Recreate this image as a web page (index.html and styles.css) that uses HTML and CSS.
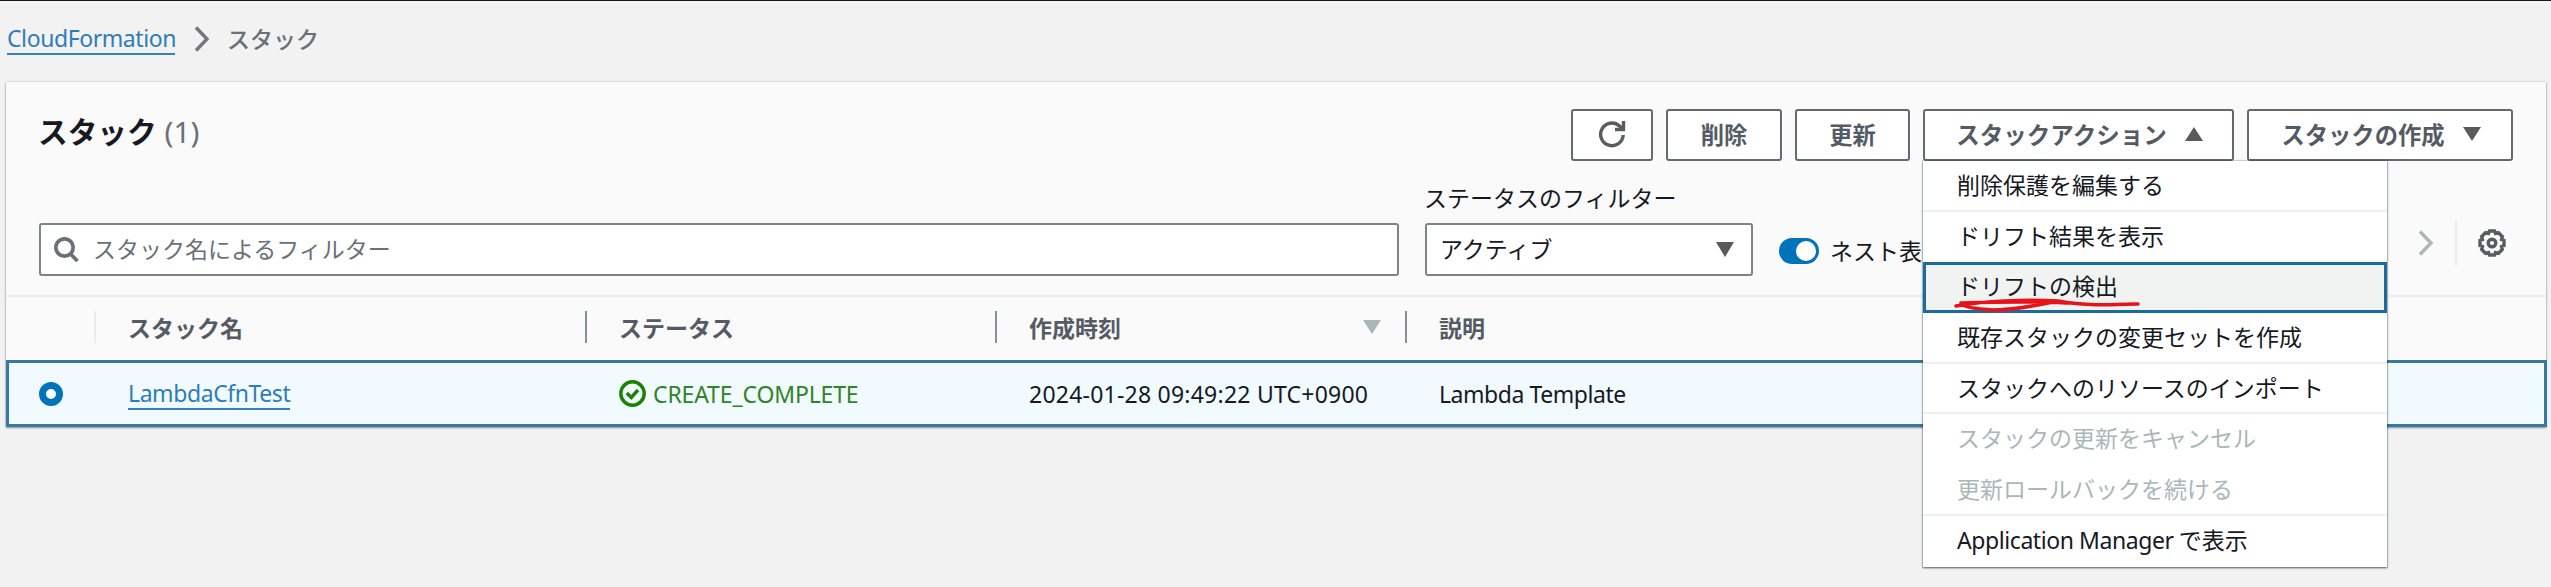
FILE: index.html
```html
<!DOCTYPE html>
<html lang="ja">
<head>
<meta charset="utf-8">
<title>CloudFormation - スタック</title>
<link rel="stylesheet" href="styles.css">
</head>
<body>
<nav class="breadcrumb">
  <a class="link crumb-link">CloudFormation</a>
  <svg class="crumb-arrow" width="16" height="26" viewBox="0 0 16 26"><path d="M2 1.500L13 13L2 24.500"/></svg>
  <span class="crumb-current">スタック</span>
</nav>
<main class="panel">
  <header class="panel-head">
    <h1 class="title">スタック <span class="count">(1)</span></h1>
    <div class="actions">
      <button class="btn refresh"><svg width="28" height="28" viewBox="0 0 28 28"><path d="M25.200 15A11.300 11.300 0 1 1 21.500 6L24 8.500"/><path d="M25.500 1V9.500H17"/></svg></button>
      <button class="btn delete">削除</button>
      <button class="btn update">更新</button>
      <div class="dropdown">
        <button class="btn stack-actions">スタックアクション<svg class="caret" width="18" height="14" viewBox="0 0 18 14"><path d="M9 0L18 14H0Z"/></svg></button>
        <ul class="menu">
          <li class="item ruled">削除保護を編集する</li>
          <li class="item">ドリフト結果を表示</li>
          <li class="item active">ドリフトの検出
            <svg class="scribble" width="188" height="16" viewBox="0 0 188 16"><path d="M2 8C30 3 70 1 104 3C85 7 60 12 40 12C22 11 8 9 7 5M104 3C130 8 155 7 184 6M8 5C40 4 75 3 112 5"/></svg>
          </li>
          <li class="item ruled">既存スタックの変更セットを作成</li>
          <li class="item ruled">スタックへのリソースのインポート</li>
          <li class="item disabled">スタックの更新をキャンセル</li>
          <li class="item disabled ruled">更新ロールバックを続ける</li>
          <li class="item"><span class="latin">Application Manager</span> で表示</li>
        </ul>
      </div>
      <button class="btn create">スタックの作成<svg class="caret" width="18" height="14" viewBox="0 0 18 14"><path d="M0 0H18L9 14Z"/></svg></button>
    </div>
  </header>
  <section class="filters">
    <div class="search">
      <svg width="26" height="26" viewBox="0 0 26 26"><circle cx="10.500" cy="10.500" r="8.700"/><path d="M16.500 17L23.500 24"/></svg>
      <span>スタック名によるフィルター</span>
    </div>
    <div class="status">
      <label class="status-label">ステータスのフィルター</label>
      <div class="select"><span>アクティブ</span><svg class="caret" width="18" height="15" viewBox="0 0 18 15"><path d="M0 0H18L9 15Z"/></svg></div>
    </div>
    <div class="nested"><i class="toggle"></i><span>ネスト表</span></div>
    <div class="pager">
      <svg class="next" width="16" height="26" viewBox="0 0 16 26"><path d="M2 1.500L13 13L2 24.500"/></svg>
      <i class="divider"></i>
      <svg class="gear" width="28" height="28" viewBox="0 0 28 28"><path d="M11.500 2H16.500L17.500 4.500L20.500 3.700L24.300 7.500L23.500 10.500L26 11.500V16.500L23.500 17.500L24.300 20.500L20.500 24.300L17.500 23.500L16.500 26H11.500L10.500 23.500L7.500 24.300L3.700 20.500L4.500 17.500L2 16.500V11.500L4.500 10.500L3.700 7.500L7.500 3.700L10.500 4.500Z"/><circle cx="14" cy="14" r="3.800"/></svg>
    </div>
  </section>
  <div class="grid head">
    <div class="cell"></div>
    <div class="cell">スタック名</div>
    <div class="cell">ステータス</div>
    <div class="cell">作成時刻<svg class="sort" width="18" height="14" viewBox="0 0 18 14"><path d="M0 0H18L9 14Z"/></svg></div>
    <div class="cell">説明</div>
  </div>
  <div class="grid row">
    <div class="cell"><i class="radio"></i></div>
    <div class="cell"><a class="link name">LambdaCfnTest</a></div>
    <div class="cell ok"><svg width="27" height="27" viewBox="0 0 27 27"><circle cx="13.500" cy="13.500" r="11.700"/><path d="M7.800 13L12.300 17.500L19 10"/></svg><span class="state">CREATE_COMPLETE</span></div>
    <div class="cell"><span class="date">2024-01-28 09:49:22 UTC+0900</span></div>
    <div class="cell"><span class="desc">Lambda Template</span></div>
  </div>
</main>
</body>
</html>
```
FILE: styles.css
```css
* { box-sizing: border-box; }
body {
  margin: 0;
  height: 587px;
  overflow: hidden;
  background: #f2f2f3;
  border-top: 1px solid #16191f;
  font-family: "Noto Sans", "Noto Sans CJK JP", sans-serif;
  font-size: 23px;
  line-height: 34px;
  color: #16191f;
}
svg { flex: none; fill: none; stroke: #5a5c60; stroke-width: 3.400; }
.link { color: #2e7db8; border-bottom: 2px solid #3584b6; line-height: 30px; }
.breadcrumb { display: flex; align-items: center; height: 81px; padding: 0 0 6px 7px; }
.crumb-link { width: 168px; white-space: nowrap; letter-spacing: -.42px; }
.crumb-arrow { margin: 0 17px 0 19px; stroke: #73767a; }
.crumb-current { color: #687078; font-weight: 500; font-family: "Noto Sans CJK JP", sans-serif; margin-bottom: 2px; }
.panel {
  margin: 0 5px 0 6px;
  height: 345px;
  background: #fafafa;
  box-shadow: 0 1px 2px rgba(0, 28, 36, .4), 0 0 2px rgba(0, 28, 36, .2);
}
.panel-head { display: flex; justify-content: space-between; padding: 27px 33px 0 33px; height: 79px; }
.title { margin: 2px 0 0 -1px; font: 700 29.700px/40px "Noto Sans CJK JP", sans-serif; }
.count { font-family: "Noto Sans", sans-serif; font-weight: 400; color: #687078; margin-left: 1px; }
.actions { display: flex; gap: 13px; }
.btn {
  display: flex;
  align-items: center;
  justify-content: center;
  height: 52px;
  padding: 0 0 2px;
  border: 2px solid #65686c;
  border-radius: 3px;
  background: #fff;
  color: #545b64;
  font: 700 23.300px/34px "Noto Sans CJK JP", sans-serif;
}
.refresh { width: 82px; }
.delete { width: 116px; }
.update { width: 115px; }
.stack-actions { width: 311px; font-size: 23.500px; padding-left: 2px; }
.create { width: 266px; padding-left: 2px; }
.caret { fill: #5a5a5c; stroke: none; margin-left: 18px; }
.dropdown { position: relative; }
.menu {
  position: absolute;
  z-index: 2;
  top: 52px;
  left: 0;
  width: 464px;
  height: 406px;
  margin: 0;
  padding: 0;
  list-style: none;
  background: #fff;
  box-shadow: 0 1px 2px rgba(0, 28, 36, .6), 0 0 1px 1px rgba(0, 28, 36, .14);
}
.item { height: 50.700px; padding: 6px 0 0 34px; white-space: nowrap; font-family: "Noto Sans CJK JP", sans-serif; }
.ruled { border-bottom: 2px solid #eeefef; }
.active { position: relative; border: 3px solid #1a6c9e; background: #f1f3f3; padding: 3px 0 0 31px; }
.disabled { color: #aab7b8; }
.latin, .link, .state, .date, .desc { font-family: "Noto Sans", sans-serif; }
.latin { letter-spacing: -.42px; }
.scribble { position: absolute; left: 28px; top: 33px; stroke: #e8121b; stroke-width: 3.500; stroke-linecap: round; }
.filters { display: flex; height: 136px; padding: 0 33px 0 33px; border-bottom: 2px solid #eaeded; }
.search, .select {
  display: flex;
  align-items: center;
  height: 53px;
  border: 2px solid #808386;
  border-radius: 3px;
  background: #fff;
}
.search { width: 1360px; margin-top: 62px; padding-left: 13px; gap: 13px; color: #687078; }
.search svg { stroke-width: 3.700; stroke: #687078; }
.search span, .select span { margin-bottom: 3px; }
.search span, .status, .nested, .head { font-family: "Noto Sans CJK JP", sans-serif; }
.status { width: 328px; margin-left: 26px; }
.status-label { display: block; height: 62px; padding-top: 19px; margin-left: -1px; }
.select { justify-content: space-between; padding: 0 17px 0 13px; }
.nested { display: flex; align-items: center; gap: 11px; height: 34px; margin: 73px 0 0 26px; }
.nested span { margin-bottom: 2px; }
.toggle { width: 40px; height: 26px; border-radius: 13px; background: #0073bb; display: flex; justify-content: flex-end; padding: 3px; }
.toggle::after { content: ""; width: 20px; height: 20px; border-radius: 50%; background: #fff; }
.pager { display: flex; align-items: center; height: 46px; margin: 59px 7px 0 auto; }
.next { stroke: #aab7b8; }
.divider { width: 2px; height: 46px; background: #eaeded; margin: 0 21px; }
.grid { display: grid; grid-template-columns: 88px 491px 410px 410px 1fr; }
.cell { display: flex; align-items: center; }
.cell + .cell { padding-left: 34px; }
.head { height: 63px; color: #545b64; font-weight: 700; padding-bottom: 3px; }
.head .cell { position: relative; }
.head .cell + .cell::before { content: ""; position: absolute; left: 0; width: 2px; height: 32px; background: #879196; }
.head .cell:nth-child(2)::before { background: #eaeded; }
.sort { fill: #aab7b8; stroke: none; margin: 0 24px 0 auto; }
.row { height: 67px; border: 3px solid #387a9f; background: #f1faff; margin-right: -1px; grid-template-columns: 85px 491px 410px 410px 1fr; }
.radio { width: 24px; height: 24px; margin-left: 30px; border: 7px solid #0073bb; border-radius: 50%; background: #fff; }
.ok { color: #2f8426; gap: 7px; }
.ok svg { stroke: #1d8102; }
.state, .date, .desc, .name { white-space: nowrap; }
.name { letter-spacing: -.42px; }
.state { letter-spacing: -.15px; }
.date { letter-spacing: .23px; }
.desc { letter-spacing: -.45px; }
```
